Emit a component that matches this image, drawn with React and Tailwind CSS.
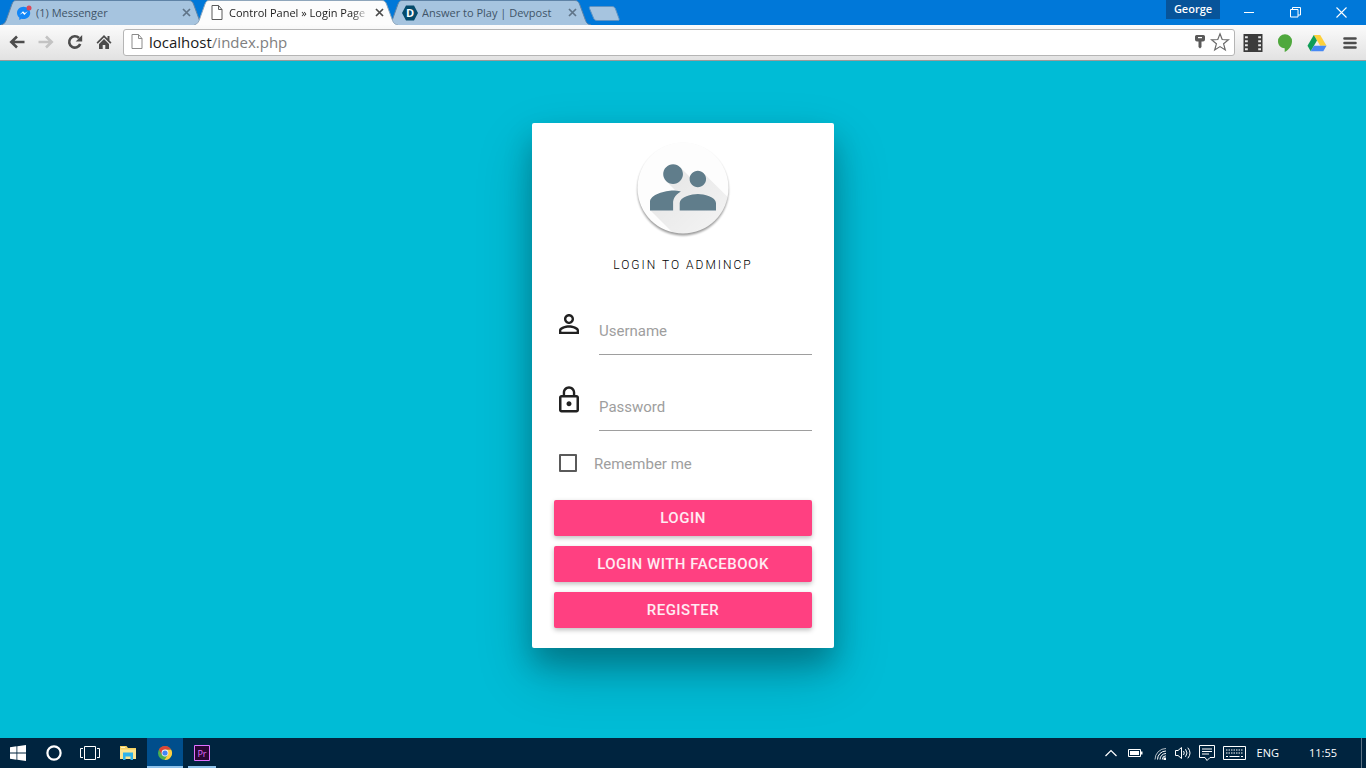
import React, { useState } from 'react';
import clsx from 'clsx';

/* ---------- Browser icons ---------- */

const MessengerIcon = () => (
  <svg viewBox="0 0 16 16" className="size-4 shrink-0">
    <path
      d="M7.6 1.8C3.9 1.8 1 4.6 1 8c0 1.900.9 3.500 2.300 4.600V15l2.200-1.200c.700.200 1.400.300 2.100.300 3.700 0 6.600-2.800 6.600-6.100S11.300 1.800 7.600 1.800z"
      fill="#1287f7"
    />
    <path d="M3.600 9.800 7 6.200l1.800 1.800 3-1.700-3.400 3.600-1.800-1.800z" fill="#fff" />
    <circle cx="13" cy="3" r="2.500" fill="#d9475a" />
  </svg>
);

const FileIcon = ({ className, stroke = '#5a5a5a' }) => (
  <svg viewBox="0 0 12 15" className={className}>
    <path d="M1 .5h6.500L11 4.500v10H1z" fill="#fff" stroke={stroke} />
    <path d="M7.500.5v4H11" fill="none" stroke={stroke} />
  </svg>
);

const DevpostIcon = () => (
  <svg viewBox="0 0 16 16" className="size-4 shrink-0">
    <path d="M4 .5h8L16 8l-4 7.500H4L0 8z" fill="#044b6c" />
    <text x="8" y="12" textAnchor="middle" fontSize="11" fontWeight="700" fill="#fff" fontFamily="Open Sans, sans-serif">
      D
    </text>
  </svg>
);

const BackIcon = ({ flip, color }) => (
  <svg viewBox="0 0 16 14" className={clsx('w-4 h-3.5', flip && '-scale-x-100')}>
    <path d="M15.500 7H3M8 1.500 2.300 7 8 12.500" fill="none" stroke={color} strokeWidth="2.600" />
  </svg>
);

const ReloadIcon = () => (
  <svg viewBox="0 0 16 16" className="size-4">
    <path d="M13.200 10A5.700 5.700 0 1 1 12 4" fill="none" stroke="#4c4c4c" strokeWidth="2.600" />
    <path d="M15.200 1v6.500H8.700z" fill="#4c4c4c" />
  </svg>
);

const HomeIcon = () => (
  <svg viewBox="0 0 16 16" className="size-4">
    <path d="M8 1 .5 8.500l1.200 1.200L8 3.500l6.300 6.200 1.200-1.200L13.500 6.500V2h-2v2.500z" fill="#4c4c4c" />
    <path d="M8 5 3 10v5h3.700v-4h2.600v4H13v-5z" fill="#4c4c4c" />
  </svg>
);

const KeyIcon = () => (
  <svg viewBox="0 0 12 16" className="w-3 h-4">
    <path
      d="M2.500 1h7q1.500 0 1.500 1.500v3Q11 7.500 9 7.500H7.500v5.500L6 14.500 4.500 13V7.500H3Q1 7.500 1 5.500v-3Q1 1 2.500 1z"
      fill="#5a5a5a"
    />
    <path d="M4 3h4v1.200H4z" fill="#fff" />
  </svg>
);

const StarIcon = () => (
  <svg viewBox="0 0 20 20" className="size-5">
    <path
      d="m10 1.800 2.200 5.700 6.300.3-4.900 4 1.700 6.200L10 14.600 4.700 18l1.700-6.200-4.900-4 6.300-.3z"
      fill="#fff"
      stroke="#6a6a6a"
      strokeWidth="1.200"
    />
  </svg>
);

const FilmIcon = () => (
  <svg viewBox="0 0 20 20" className="size-5">
    <path d="M.5 1h19v18H.5z" fill="#3b3b3b" />
    <path
      d="M2 3.200h2.800v2H2zm0 4h2.800v2H2zm0 4h2.800v2H2zm0 4h2.800v2H2zM15.200 3.200H18v2h-2.800zm0 4H18v2h-2.800zm0 4H18v2h-2.800zm0 4H18v2h-2.800z"
      fill="#e8e8e8"
    />
  </svg>
);

const HangoutsIcon = () => (
  <svg viewBox="0 0 16 20" className="w-4 h-5">
    <path d="M8 1.200a7 7 0 0 0-7 7c0 3.900 3 6.900 6.700 7V19c3.800-2 7.300-6 7.300-10.800a7 7 0 0 0-7-7z" fill="#4fa83d" />
  </svg>
);

const DriveIcon = () => (
  <svg viewBox="0 0 20 18" className="w-5 h-[18px]">
    <path d="M6.800 1h6.400l6.300 10.800h-6.300z" fill="#fdd03b" />
    <path d="M6.800 1 .5 11.800 3.700 17.300 10 6.500z" fill="#0f9d58" />
    <path d="M3.700 17.300 6.900 11.800h12.600l-3.200 5.500z" fill="#4688f4" />
  </svg>
);

const MenuIcon = () => (
  <svg viewBox="0 0 14 14" className="size-3.5">
    <path d="M1.500 2.500h11M1.500 7h11M1.500 11.500h11" stroke="#4c4c4c" strokeWidth="2.600" strokeLinecap="round" />
  </svg>
);

/* ---------- Browser chrome ---------- */

const tabs = [
  { id: 'messenger', title: '(1) Messenger', icon: <MessengerIcon /> },
  {
    id: 'panel',
    title: 'Control Panel » Login Page',
    icon: (
      <span className="w-4 flex justify-center shrink-0">
        <FileIcon className="w-3 h-[15px]" />
      </span>
    ),
    active: true,
  },
  { id: 'devpost', title: 'Answer to Play | Devpost', icon: <DevpostIcon /> },
];

const Tab = ({ title, icon, active }) => (
  <div className={clsx('relative w-[204px] h-[25px] -mr-[11px] flex items-center pl-[15px] pr-3', active && 'z-10')}>
    <svg viewBox="0 0 204 25" preserveAspectRatio="none" className="absolute inset-0 size-full">
      <path
        d="M0 25C4 24 5 21 6 18L11 4C12 1.500 13 .5 15 .5H188C190 .5 191.500 1.500 192.500 4L198 19C199.500 23 200 24 204 25z"
        fill={active ? '#fcfcfc' : '#a6c4df'}
      />
      <path
        d="M0 25C4 24 5 21 6 18L11 4C12 1.500 13 .5 15 .5H188C190 .5 191.500 1.500 192.500 4L198 19C199.500 23 200 24 204 25"
        fill="none"
        stroke={active ? '#8fa6bb' : '#5f83a6'}
      />
    </svg>
    <button className="relative flex-1 min-w-0 flex items-center gap-1 text-left">
      {icon}
      <span
        className={clsx(
          'flex-1 overflow-hidden whitespace-nowrap text-[11px] leading-4',
          active ? 'text-[#1c1c1c] [mask-image:linear-gradient(to_right,#000_88%,transparent)]' : 'text-[#3f5468]'
        )}
      >
        {title}
      </span>
    </button>
    <button aria-label={`Close ${title}`} className="relative ml-1 p-0.5">
      <svg viewBox="0 0 9 9" className="size-[9px]">
        <path d="m1 1 7 7M8 1 1 8" stroke={active ? '#4a4a4a' : '#5f7488'} strokeWidth="1.700" />
      </svg>
    </button>
  </div>
);

const TitleBar = () => (
  <div className="flex h-[25px] bg-[#0078d9] pl-px pr-0.5">
    {tabs.map((tab) => (
      <Tab key={tab.id} title={tab.title} icon={tab.icon} active={tab.active} />
    ))}
    <button aria-label="New tab" className="ml-2 mt-1.5 self-start">
      <svg viewBox="0 0 32 15" className="w-8 h-[15px]">
        <path d="M3 .5H24C26 .5 27 1.500 27.500 3L31 12.500C31.500 14 31 14.500 30 14.500H9C7 14.500 6 13.500 5.500 12L1.500 2.500C1 1 1.500.5 3 .5z" fill="#a6c4df" stroke="#5f93c2" />
      </svg>
    </button>
    <button className="ml-auto mr-1.5 h-[19px] w-[54px] bg-[#07549a] text-[11px] leading-4 font-semibold text-white text-center pb-0.5">
      George
    </button>
    <div className="flex items-center text-white">
      <button aria-label="Minimize" className="w-[46px] flex justify-center">
        <svg viewBox="0 0 11 11" className="size-[11px]">
          <path d="M0 5.500h10" stroke="currentColor" />
        </svg>
      </button>
      <button aria-label="Restore" className="w-[46px] flex justify-center">
        <svg viewBox="0 0 11 11" className="size-[11px]">
          <path d="M.5 2.500h7.500v7.500H.5zM2.500 2.500V.5h8v7.500H8" fill="none" stroke="currentColor" />
        </svg>
      </button>
      <button aria-label="Close" className="w-[46px] flex justify-center">
        <svg viewBox="0 0 11 11" className="size-[11px]">
          <path d="m.5.5 10 10M10.500.5l-10 10" stroke="currentColor" strokeWidth="1.100" />
        </svg>
      </button>
    </div>
  </div>
);

const Toolbar = () => {
  const [url, setUrl] = useState('localhost/index.php');
  const slash = url.indexOf('/');
  const host = slash < 0 ? url : url.slice(0, slash);
  const path = slash < 0 ? '' : url.slice(slash);

  return (
    <div className="flex items-center h-9 px-[9px] border-b border-[#9a9a9a] bg-gradient-to-b from-[#fbfbfb] to-[#e2e2e2]">
      <div className="flex items-center gap-[13px] pb-px">
        <button aria-label="Back"><BackIcon color="#4c4c4c" /></button>
        <button aria-label="Forward"><BackIcon flip color="#c3c3c3" /></button>
        <button aria-label="Reload"><ReloadIcon /></button>
        <button aria-label="Home"><HomeIcon /></button>
      </div>

      {/* Address bar: the host is darker than the rest of the url */}
      <div className="flex-1 flex items-center h-[27px] ml-[11px] pl-[7px] pr-0.5 pb-0.5 rounded-[3px] border border-[#b5b5b5] bg-white">
        <FileIcon className="w-3 h-[15px] mr-1.5 shrink-0" stroke="#8b8b8b" />
        <div className="relative flex-1 h-6 text-[15px] leading-6">
          <div aria-hidden="true" className="absolute inset-0 text-[#808080] whitespace-pre">
            <span className="text-[#1a1a1a]">{host}</span>{path}
          </div>
          <input
            type="text"
            aria-label="Address"
            value={url}
            onChange={(e) => setUrl(e.target.value)}
            className="relative block w-full h-6 bg-transparent text-transparent caret-black outline-none"
          />
        </div>
        <button aria-label="Saved passwords" className="mr-1"><KeyIcon /></button>
        <button aria-label="Bookmark" className="mr-0.5"><StarIcon /></button>
      </div>

      <div className="flex items-center gap-3.5 ml-2">
        <button aria-label="Video extension"><FilmIcon /></button>
        <button aria-label="Hangouts"><HangoutsIcon /></button>
        <button aria-label="Drive"><DriveIcon /></button>
        <button aria-label="Menu" className="ml-0.5"><MenuIcon /></button>
      </div>
    </div>
  );
};

/* ---------- Login card ---------- */

const Logo = () => (
  <svg viewBox="0 0 100 100" className="size-[100px] mx-auto">
    <defs>
      <clipPath id="disc">
        <circle cx="50" cy="49" r="45.500" />
      </clipPath>
      <linearGradient id="cast" x1="0.200" y1="0.200" x2="0.700" y2="0.700">
        <stop offset="0" stopColor="#000" stopOpacity="0.080" />
        <stop offset="1" stopColor="#000" stopOpacity="0.030" />
      </linearGradient>
      <filter id="soft" x="-10%" y="-10%" width="120%" height="120%">
        <feGaussianBlur stdDeviation="1" />
      </filter>
    </defs>
    <circle cx="50" cy="51" r="45.500" fill="#000" opacity="0.400" filter="url(#soft)" />
    <circle cx="50" cy="49" r="45.500" fill="#fdfdfd" />
    <path
      clipPath="url(#disc)"
      d="M17 71V62L45 54 33 42 47 28 59 40 70.700 34.200 131 94 77 131z"
      fill="url(#cast)"
    />
    <g transform="translate(10.400 8.700) scale(3.300)" fill="#607d8b">
      <path d="M16.500 12c1.380 0 2.490-1.120 2.490-2.500S17.880 7 16.500 7C15.120 7 14 8.120 14 9.500s1.120 2.500 2.500 2.500zM9 11c1.660 0 2.990-1.340 2.990-3S10.660 5 9 5C7.340 5 6 6.340 6 8s1.340 3 3 3zm7.500 3c-1.830 0-5.500.92-5.500 2.750V19h11v-2.250c0-1.830-3.670-2.750-5.500-2.750zM9 13c-2.330 0-7 1.170-7 3.500V19h7v-2.250c0-.85.33-2.340 2.370-3.470C10.500 13.100 9.660 13 9 13z" />
    </g>
  </svg>
);

const PersonIcon = () => (
  <svg viewBox="0 0 24 24" className="size-[30px] shrink-0" fill="#212121">
    <path d="M12 5.900c1.160 0 2.100.94 2.100 2.100s-.94 2.100-2.100 2.100S9.900 9.160 9.900 8s.94-2.100 2.100-2.100m0 9c2.970 0 6.100 1.460 6.100 2.100v1.100H5.900V17c0-.64 3.130-2.100 6.100-2.100M12 4C9.790 4 8 5.790 8 8s1.790 4 4 4 4-1.790 4-4-1.790-4-4-4zm0 9c-2.670 0-8 1.340-8 4v3h16v-3c0-2.660-5.330-4-8-4z" />
  </svg>
);

const LockIcon = () => (
  <svg viewBox="0 0 24 24" className="size-[30px] shrink-0" fill="#212121">
    <path d="M12 17c1.100 0 2-.9 2-2s-.9-2-2-2-2 .9-2 2 .9 2 2 2zm6-9h-1V6c0-2.760-2.240-5-5-5S7 3.240 7 6v2H6c-1.100 0-2 .9-2 2v10c0 1.100.9 2 2 2h12c1.100 0 2-.9 2-2V10c0-1.100-.9-2-2-2zM8.900 6c0-1.710 1.390-3.100 3.100-3.100s3.100 1.390 3.100 3.100v2H8.900V6zM18 20H6V10h12v10z" />
  </svg>
);

const Field = ({ id, type, label, icon }) => (
  <div className="flex items-start gap-[15px]">
    {icon}
    <input
      id={id}
      type={type}
      aria-label={label}
      placeholder={label}
      className="flex-1 min-w-0 h-[46px] pb-px border-b border-[#9e9e9e] text-[15px] text-[#212121] placeholder:text-[#9e9e9e] outline-none"
    />
  </div>
);

const ActionButton = ({ children, type = 'button' }) => (
  <button
    type={type}
    className="h-9 rounded-xs bg-[#ff4081] text-[15px] leading-9 font-medium tracking-[0.5px] uppercase text-white/90 text-center shadow-[0_2px_5px_0_rgba(0,0,0,0.26)]"
  >
    {children}
  </button>
);

const LoginCard = () => (
  <form
    onSubmit={(e) => e.preventDefault()}
    className="w-[302px] mt-[62px] px-[22px] pt-4 pb-5 rounded-xs bg-white font-[Roboto,sans-serif] shadow-[0_16px_28px_0_rgba(0,0,0,0.22),0_25px_55px_0_rgba(0,0,0,0.21)]"
  >
    <Logo />
    <h1 className="mt-4 text-center text-xs leading-5 font-light tracking-[2px] uppercase text-black">
      Login to AdminCP
    </h1>

    <div className="flex flex-col gap-[30px] mt-[34px]">
      <Field id="username" type="text" label="Username" icon={<PersonIcon />} />
      <Field id="password" type="password" label="Password" icon={<LockIcon />} />
    </div>

    <div className="flex items-center mt-[22px] pl-[5px]">
      <input
        id="remember"
        type="checkbox"
        className="appearance-none size-[18px] rounded-[1px] border-2 border-[#5a5a5a] checked:bg-[#ff4081] checked:border-[#ff4081]"
      />
      <label htmlFor="remember" className="pl-[17px] pt-0.5 text-[15px] leading-[18px] text-[#9e9e9e]">
        Remember me
      </label>
    </div>

    <div className="flex flex-col gap-2.5 mt-[27px]">
      <ActionButton type="submit">Login</ActionButton>
      <ActionButton>Login with Facebook</ActionButton>
      <ActionButton>Register</ActionButton>
    </div>
  </form>
);

/* ---------- Taskbar ---------- */

const WindowsIcon = () => (
  <svg viewBox="0 0 16 16" className="size-4" fill="#fff">
    <path d="M0 2.200 6.500 1.300v6.200H0zM7.300 1.200 16 0v7.500H7.300zM0 8.400h6.500v6.300L0 13.800zM7.300 8.400H16V16l-8.700-1.200z" />
  </svg>
);

const CortanaIcon = () => (
  <svg viewBox="0 0 16 16" className="size-4">
    <circle cx="8" cy="8" r="6.600" fill="none" stroke="#fff" strokeWidth="2.200" />
  </svg>
);

const TaskViewIcon = () => (
  <svg viewBox="0 0 20 16" className="w-5 h-4">
    <path d="M4.500 1.500h11v13h-11zM3 3.500H.5v9H3M17 3.500h2.500v9H17" fill="none" stroke="#fff" />
  </svg>
);

const ExplorerIcon = () => (
  <svg viewBox="0 0 16 16" className="size-4">
    <path d="M0 1h6.500l1.500 2H16v11H0z" fill="#f5d262" />
    <path d="M0 4.500h16V14H0z" fill="#fde58f" />
    <path d="M1 2h4v1H1z" fill="#fff4c8" />
    <path d="M3 7.500h10V15h-2.500v-3.500h-5V15H3z" fill="#30b3ea" />
  </svg>
);

const ChromeIcon = () => (
  <svg viewBox="0 0 16 16" className="size-4">
    <circle cx="8" cy="8" r="7" fill="#4caf50" />
    <path d="M8 8 1.900 4.500A7 7 0 0 1 14.200 4.700H8z" fill="#db4437" />
    <path d="M14.200 4.700A7 7 0 0 1 7.500 15L11 9.500 8 4.700z" fill="#ffcd40" />
    <path d="M1.900 4.500 5 9.800 8 4.700h3z" fill="#db4437" />
    <circle cx="8" cy="8" r="3.400" fill="#f5f5f5" />
    <circle cx="8" cy="8" r="2.600" fill="#4285f4" />
  </svg>
);

const PremiereIcon = () => (
  <svg viewBox="0 0 16 16" className="size-4">
    <path d="M.5.5h15v15H.5z" fill="#2a0634" stroke="#e070ff" />
    <text x="8" y="11.500" textAnchor="middle" fontSize="9" fill="#e070ff" fontFamily="Open Sans, sans-serif">
      Pr
    </text>
  </svg>
);

const TaskButton = ({ label, className, children }) => (
  <button aria-label={label} className={clsx('w-9 h-full flex items-center justify-center', className)}>
    {children}
  </button>
);

const Tray = () => (
  <div className="flex items-center gap-2 text-white">
    <svg viewBox="0 0 16 16" className="size-4">
      <path d="m2.500 11 5.500-5.500 5.500 5.500" fill="none" stroke="currentColor" strokeWidth="1.200" />
    </svg>
    <svg viewBox="0 0 16 16" className="size-4">
      <path d="M1.500 4.500h12v7h-12z" fill="none" stroke="currentColor" />
      <path d="M3 6h9v4H3zM14 6.500h1.500v3H14z" fill="currentColor" />
    </svg>
    <svg viewBox="0 0 16 16" className="size-4" fill="none" stroke="currentColor">
      <path d="M4 14.500A11 11 0 0 1 15 3.500" opacity="0.700" />
      <path d="M6.500 14.500A8.500 8.500 0 0 1 15 6" />
      <path d="M9 14.500a6 6 0 0 1 6-6" />
      <path d="M11.300 14.500a3.700 3.700 0 0 1 3.700-3.700" />
      <path d="M12.500 12.500H15V15h-2.500z" fill="currentColor" stroke="none" />
    </svg>
    <svg viewBox="0 0 16 16" className="size-4" fill="none" stroke="currentColor">
      <path d="M.5 5.500H3L6.500 2.500v11L3 10.500H.5z" />
      <path d="M8.500 6q1.500 2 0 4M10.500 4.200q3 3.800 0 7.600M12.800 2.700q4.400 5.300 0 10.600" />
    </svg>
    <svg viewBox="0 0 16 16" className="size-4" fill="none" stroke="currentColor">
      <path d="M.5.500h15v12H11L8 15.500 6 12.500H.5zM3 4h10M3 6.500h10M3 9h7" />
    </svg>
    <svg viewBox="0 0 23 14" className="w-[23px] h-3.5" fill="none" stroke="currentColor">
      <path d="M.5.500h22v13H.5z" />
      <path d="M3 4h17M3 7h17" strokeDasharray="1.500 1" />
      <path d="M3 10.500h2M6.500 10.500h10M18 10.500h2" />
    </svg>
    <span className="ml-[3px] text-[11px] leading-4">ENG</span>
    <time className="ml-[22px] text-[11px] leading-4">11:55</time>
  </div>
);

const Taskbar = () => (
  <div className="flex h-[30px] bg-[#00243f]">
    <TaskButton label="Start"><WindowsIcon /></TaskButton>
    <TaskButton label="Cortana"><CortanaIcon /></TaskButton>
    <TaskButton label="Task view"><TaskViewIcon /></TaskButton>
    <div className="flex gap-px ml-0.5">
      <TaskButton label="File Explorer"><ExplorerIcon /></TaskButton>
      <TaskButton label="Chrome" className="bg-[#004e8c] border-b-2 border-[#8fc3ec] pt-0.5">
        <ChromeIcon />
      </TaskButton>
      <TaskButton label="Premiere Pro">
        <span className="w-7 h-full flex items-center justify-center border-b-2 border-[#8fc3ec] pt-0.5">
          <PremiereIcon />
        </span>
      </TaskButton>
    </div>
    <div className="ml-auto flex">
      <Tray />
      <div className="w-[5px] ml-6 border-l border-[#5c7284]" />
    </div>
  </div>
);

const App = () => (
  <div className="min-h-screen flex flex-col font-['Open_Sans',sans-serif]">
    <header>
      <TitleBar />
      <Toolbar />
    </header>
    <main className="flex-1 flex items-start justify-center bg-[#00bcd6]">
      <LoginCard />
    </main>
    <footer>
      <Taskbar />
    </footer>
  </div>
);

export default App;
